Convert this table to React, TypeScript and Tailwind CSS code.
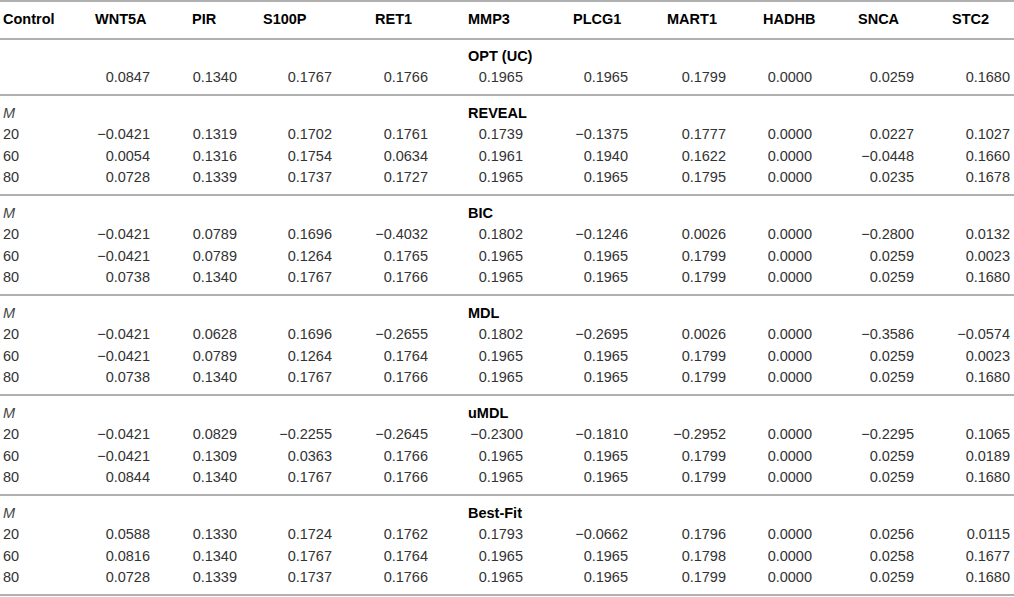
import React from "react";

const cols = [
  { name: "Control", pr: "" },
  { name: "WNT5A", pr: "pr-[42px]" },
  { name: "PIR", pr: "pr-[26px]" },
  { name: "S100P", pr: "pr-[43px]" },
  { name: "RET1", pr: "pr-[40px]" },
  { name: "MMP3", pr: "pr-[50px]" },
  { name: "PLCG1", pr: "pr-[39px]" },
  { name: "MART1", pr: "pr-[37px]" },
  { name: "HADHB", pr: "pr-[46px]" },
  { name: "SNCA", pr: "pr-[38px]" },
  { name: "STC2", pr: "pr-[4px]" },
];

const grid =
  "grid grid-cols-[92px_97px_71px_112px_93px_105px_94px_96px_95px_94px_62px] pl-[3px]";

const m = "\u2212";

type Block = { title: string; rows: { label: string; vals: string[] }[] };

const blocks: Block[] = [
  {
    title: "REVEAL",
    rows: [
      { label: "20", vals: [m + "0.0421", "0.1319", "0.1702", "0.1761", "0.1739", m + "0.1375", "0.1777", "0.0000", "0.0227", "0.1027"] },
      { label: "60", vals: ["0.0054", "0.1316", "0.1754", "0.0634", "0.1961", "0.1940", "0.1622", "0.0000", m + "0.0448", "0.1660"] },
      { label: "80", vals: ["0.0728", "0.1339", "0.1737", "0.1727", "0.1965", "0.1965", "0.1795", "0.0000", "0.0235", "0.1678"] },
    ],
  },
  {
    title: "BIC",
    rows: [
      { label: "20", vals: [m + "0.0421", "0.0789", "0.1696", m + "0.4032", "0.1802", m + "0.1246", "0.0026", "0.0000", m + "0.2800", "0.0132"] },
      { label: "60", vals: [m + "0.0421", "0.0789", "0.1264", "0.1765", "0.1965", "0.1965", "0.1799", "0.0000", "0.0259", "0.0023"] },
      { label: "80", vals: ["0.0738", "0.1340", "0.1767", "0.1766", "0.1965", "0.1965", "0.1799", "0.0000", "0.0259", "0.1680"] },
    ],
  },
  {
    title: "MDL",
    rows: [
      { label: "20", vals: [m + "0.0421", "0.0628", "0.1696", m + "0.2655", "0.1802", m + "0.2695", "0.0026", "0.0000", m + "0.3586", m + "0.0574"] },
      { label: "60", vals: [m + "0.0421", "0.0789", "0.1264", "0.1764", "0.1965", "0.1965", "0.1799", "0.0000", "0.0259", "0.0023"] },
      { label: "80", vals: ["0.0738", "0.1340", "0.1767", "0.1766", "0.1965", "0.1965", "0.1799", "0.0000", "0.0259", "0.1680"] },
    ],
  },
  {
    title: "uMDL",
    rows: [
      { label: "20", vals: [m + "0.0421", "0.0829", m + "0.2255", m + "0.2645", m + "0.2300", m + "0.1810", m + "0.2952", "0.0000", m + "0.2295", "0.1065"] },
      { label: "60", vals: [m + "0.0421", "0.1309", "0.0363", "0.1766", "0.1965", "0.1965", "0.1799", "0.0000", "0.0259", "0.0189"] },
      { label: "80", vals: ["0.0844", "0.1340", "0.1767", "0.1766", "0.1965", "0.1965", "0.1799", "0.0000", "0.0259", "0.1680"] },
    ],
  },
  {
    title: "Best-Fit",
    rows: [
      { label: "20", vals: ["0.0588", "0.1330", "0.1724", "0.1762", "0.1793", m + "0.0662", "0.1796", "0.0000", "0.0256", "0.0115"] },
      { label: "60", vals: ["0.0816", "0.1340", "0.1767", "0.1764", "0.1965", "0.1965", "0.1798", "0.0000", "0.0258", "0.1677"] },
      { label: "80", vals: ["0.0728", "0.1339", "0.1737", "0.1766", "0.1965", "0.1965", "0.1799", "0.0000", "0.0259", "0.1680"] },
    ],
  },
];

const optVals = ["0.0847", "0.1340", "0.1767", "0.1766", "0.1965", "0.1965", "0.1799", "0.0000", "0.0259", "0.1680"];

function ValueRow({ label, vals }: { label: string; vals: string[] }) {
  return (
    <div className={grid + " h-[21.3px] leading-[21.3px]"}>
      <div className="text-left">{label}</div>
      {vals.map((v, i) => (
        <div key={i} className={"text-right whitespace-nowrap " + cols[i + 1].pr}>
          {v}
        </div>
      ))}
    </div>
  );
}

function TitleRow({ title, showM }: { title: string; showM: boolean }) {
  return (
    <div className={grid + " h-[21.3px] leading-[21.3px]"}>
      <div className="italic text-[#444]">{showM ? "M" : ""}</div>
      <div className="col-start-6 font-bold text-black whitespace-nowrap">{title}</div>
    </div>
  );
}

export default function App() {
  return (
    <div className="w-[1014px] h-[597px] bg-white overflow-hidden font-['Liberation_Sans',Arial,Helvetica,sans-serif] text-[14.5px] text-[#333]">
      <div className={grid + " h-[40px] items-center border-t-2 border-b-2 border-[#b0b0b0] font-bold text-black"}>
        {cols.map((c) => (
          <div key={c.name} className="text-left whitespace-nowrap">
            {c.name}
          </div>
        ))}
      </div>
      <div className="h-[56px] pt-[6px] border-b-2 border-[#b0b0b0]">
        <TitleRow title="OPT (UC)" showM={false} />
        <ValueRow label="" vals={optVals} />
      </div>
      {blocks.map((b) => (
        <div key={b.title} className="h-[100px] pt-[7px] border-b-2 border-[#b0b0b0]">
          <TitleRow title={b.title} showM={true} />
          {b.rows.map((r) => (
            <ValueRow key={r.label} label={r.label} vals={r.vals} />
          ))}
        </div>
      ))}
    </div>
  );
}
